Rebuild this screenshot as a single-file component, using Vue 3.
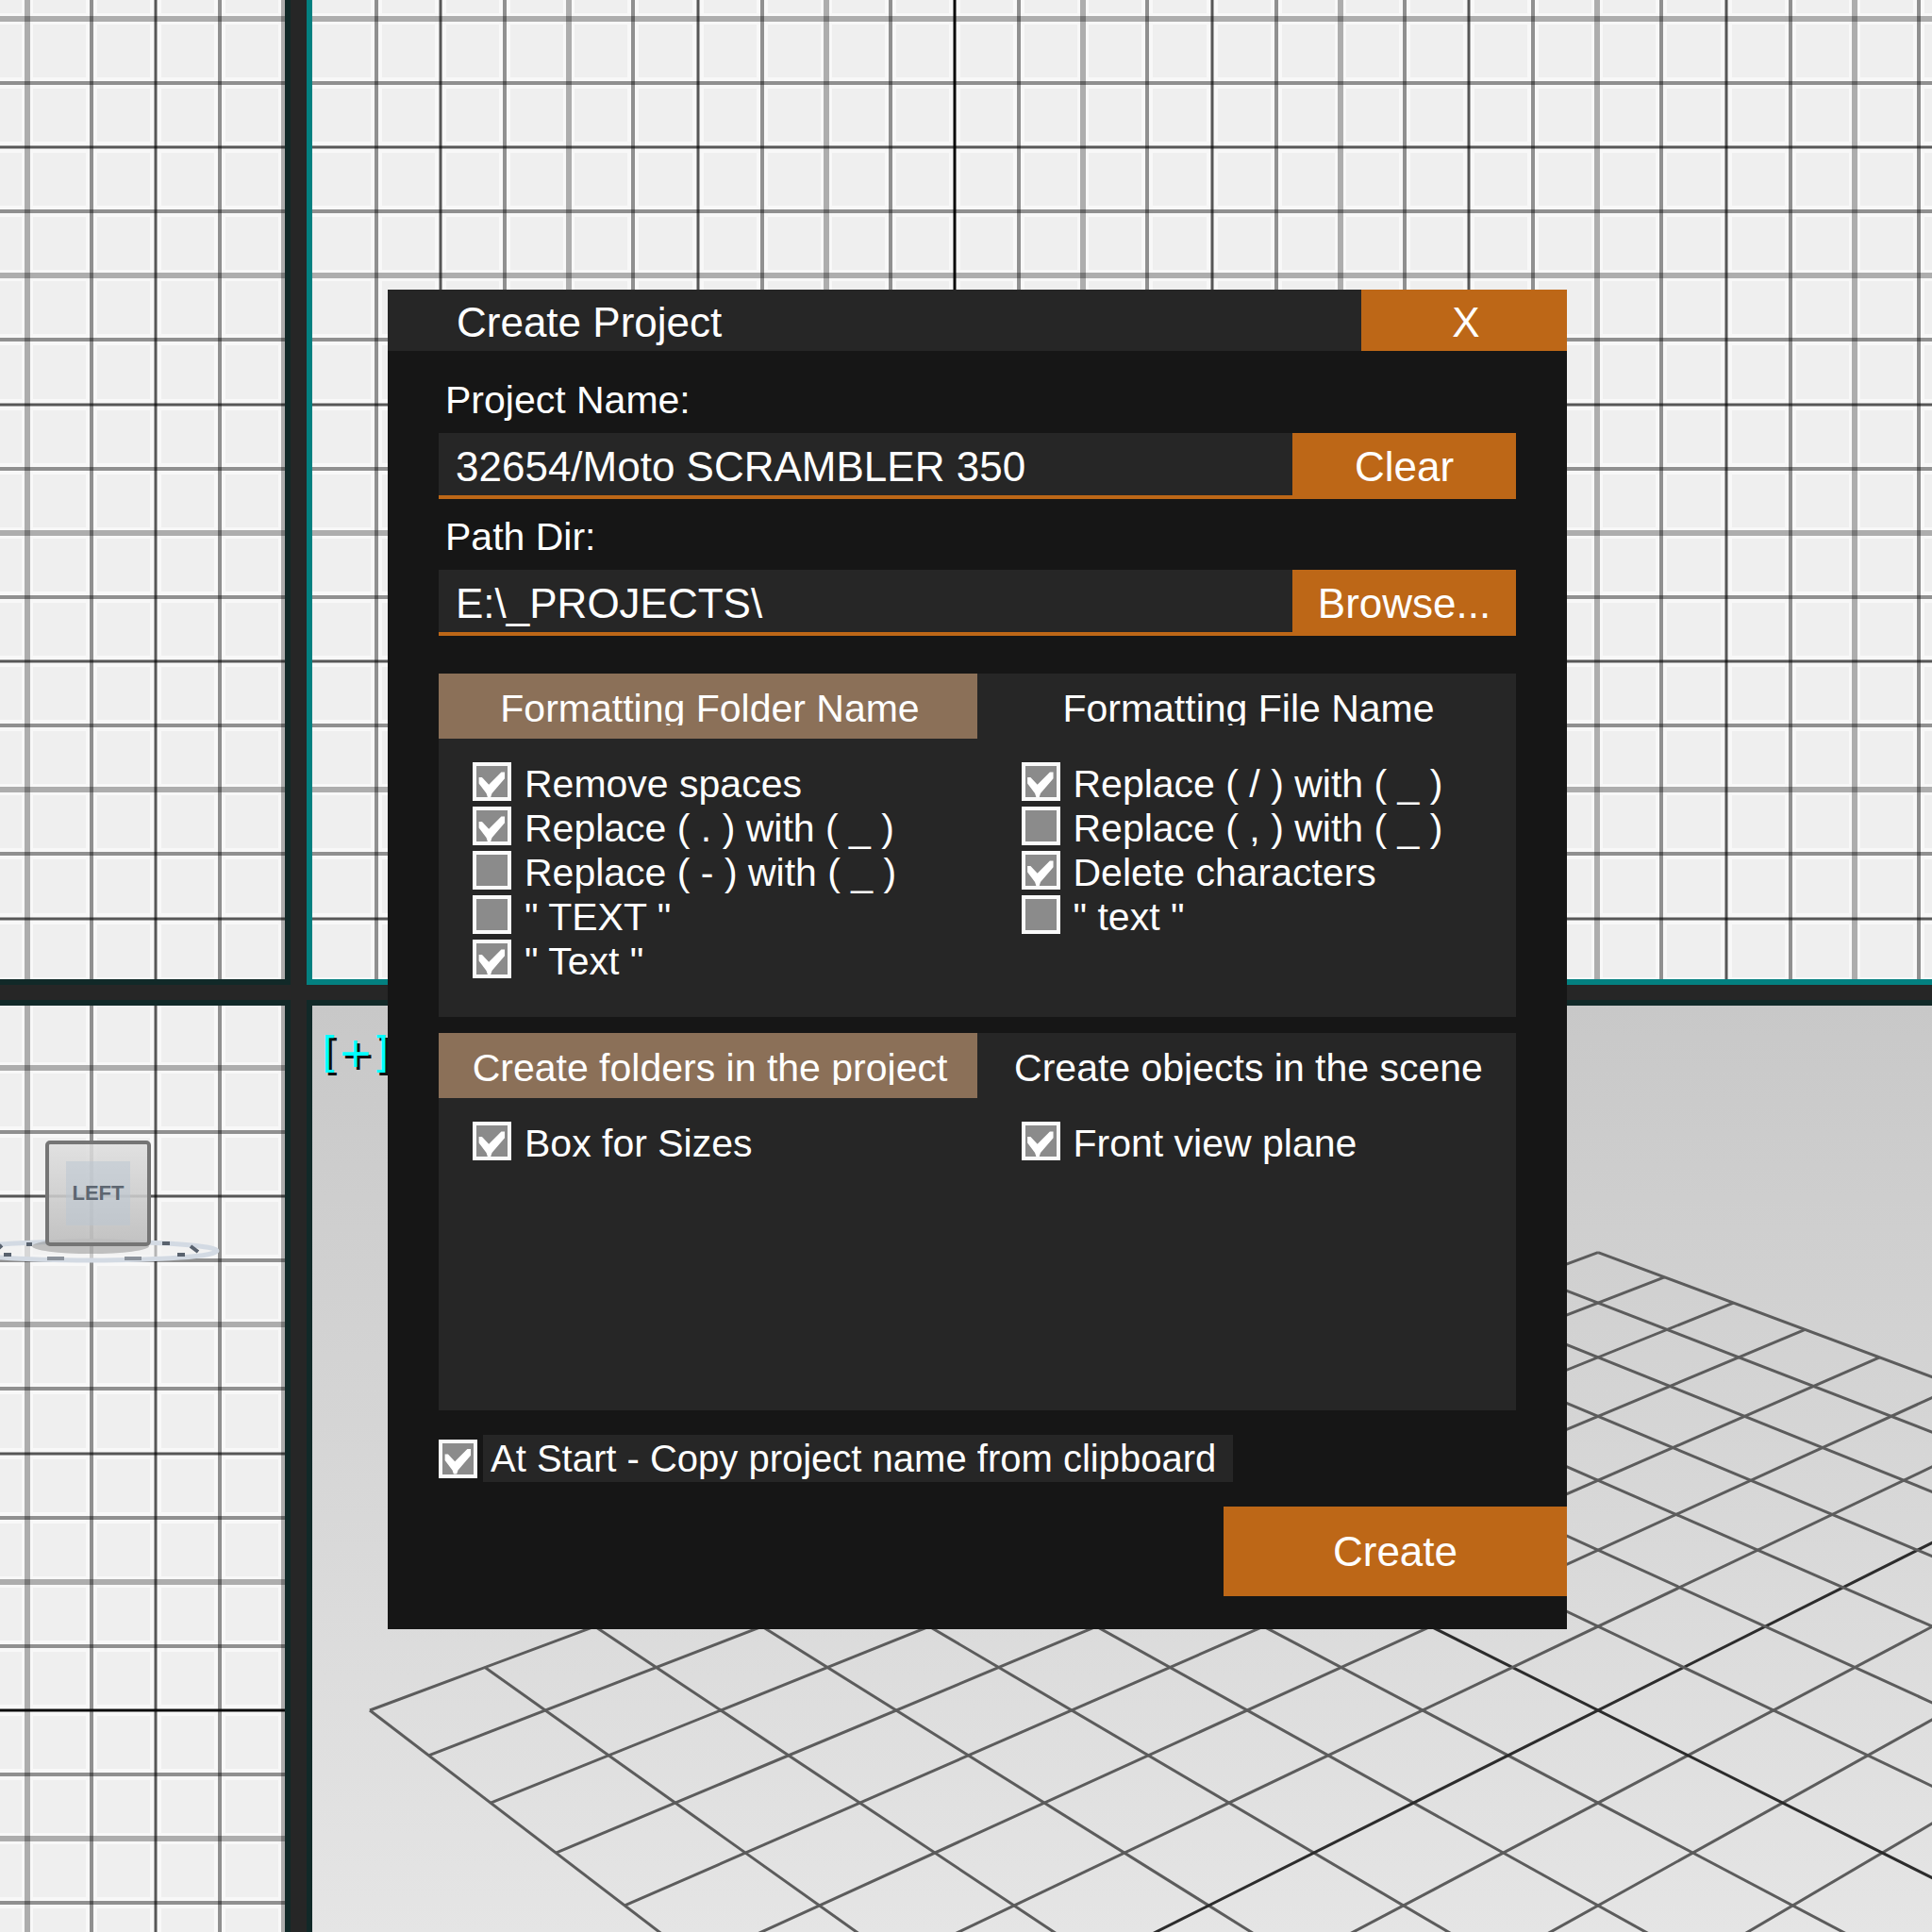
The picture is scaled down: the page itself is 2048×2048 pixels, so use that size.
<template>
  <main class="workspace">
    <div class="viewports">
      <section v-for="view in views" :key="view.name" class="viewport" :class="{ active: view.active }">
        <svg class="grid" aria-hidden="true">
          <g class="halo">
            <line v-for="line in view.columns" :key="'x' + line.at" :x1="line.at" :x2="line.at" y1="0" y2="100%"/>
            <line v-for="line in view.rows" :key="'y' + line.at" :y1="line.at" :y2="line.at" x1="0" x2="100%"/>
          </g>
          <line v-for="line in view.columns" :key="'x' + line.at" :class="line.kind"
                :x1="line.at" :x2="line.at" y1="0" y2="100%"/>
          <line v-for="line in view.rows" :key="'y' + line.at" :class="line.kind"
                :y1="line.at" :y2="line.at" x1="0" x2="100%"/>
        </svg>

        <div v-if="view.cube" class="view-cube">
          <svg class="compass" viewBox="0 0 280 32" aria-hidden="true">
            <ellipse cx="140" cy="13" rx="134" ry="10" fill="#f4f4f4" fill-opacity="0.6" stroke="#d3dae3" stroke-width="5"/>
            <ellipse cx="140" cy="8" rx="62" ry="8" fill="#8c8c8c" opacity="0.5"/>
            <path d="M38 14l8-7M48 17h8M72 6h6M216 5h8M232 17h8M246 8l8 6" fill="none" stroke="#59626e" stroke-width="4"/>
            <path d="M94 21h18M176 21h18" fill="none" stroke="#8b929b" stroke-width="4"/>
          </svg>
          <div class="cube-face"><span>LEFT</span></div>
        </div>
      </section>

      <section class="viewport perspective">
        <svg class="grid" viewBox="0 0 1717 982" preserveAspectRatio="xMinYMin slice" aria-hidden="true">
          <line v-for="(line, i) in floorLines" :key="i" :class="line.axis ? 'floor-axis' : 'floor'"
                :x1="line.from.x" :y1="line.from.y" :x2="line.to.x" :y2="line.to.y"/>
        </svg>
        <span class="view-menu">[+]</span>
      </section>
    </div>

    <form class="dialog" role="dialog" aria-labelledby="dialog-title" @submit.prevent>
      <header class="title-bar">
        <h1 id="dialog-title">Create Project</h1>
        <button type="button" class="btn close">X</button>
      </header>

      <div class="content">
        <label for="project-name">Project Name:</label>
        <div class="field">
          <input id="project-name" v-model="projectName" type="text" spellcheck="false">
          <button type="button" class="btn" @click="projectName = ''">Clear</button>
        </div>

        <label for="path-dir">Path Dir:</label>
        <div class="field">
          <input id="path-dir" v-model="pathDir" type="text" spellcheck="false">
          <button type="button" class="btn">Browse...</button>
        </div>

        <section v-for="(panel, p) in panels" :key="p" class="panel" :class="panel.size">
          <div class="tabs">
            <button v-for="(tab, t) in panel.tabs" :key="tab" type="button" class="tab"
                    :class="{ selected: panel.selected === t }" @click="panel.selected = t">
              <span>{{ tab }}</span>
            </button>
          </div>
          <div class="options">
            <div v-for="(column, c) in panel.columns" :key="c">
              <label v-for="option in column" :key="option.label" class="option">
                <input v-model="option.checked" type="checkbox">
                <span>{{ option.label }}</span>
              </label>
            </div>
          </div>
        </section>

        <label class="option clipboard">
          <input v-model="copyAtStart" type="checkbox">
          <span>At Start - Copy project name from clipboard</span>
        </label>
      </div>

      <footer class="actions">
        <button type="submit" class="btn create">Create</button>
      </footer>
    </form>
  </main>
</template>

<script setup>
import {ref} from 'vue'

const projectName = ref('32654/Moto SCRAMBLER 350')
const pathDir = ref('E:\\_PROJECTS\\')
const copyAtStart = ref(true)

const panels = ref([
  {
    size: 'formatting',
    tabs: ['Formatting Folder Name', 'Formatting File Name'],
    selected: 0,
    columns: [
      [
        {label: 'Remove spaces', checked: true},
        {label: 'Replace ( . ) with ( _ )', checked: true},
        {label: 'Replace ( - ) with ( _ )', checked: false},
        {label: '" TEXT "', checked: false},
        {label: '" Text "', checked: true}
      ],
      [
        {label: 'Replace ( / ) with ( _ )', checked: true},
        {label: 'Replace ( , ) with ( _ )', checked: false},
        {label: 'Delete characters', checked: true},
        {label: '" text "', checked: false}
      ]
    ]
  },
  {
    size: 'creating',
    tabs: ['Create folders in the project', 'Create objects in the scene'],
    selected: 0,
    columns: [
      [{label: 'Box for Sizes', checked: true}],
      [{label: 'Front view plane', checked: true}]
    ]
  }
])

// Flat views: every fourth line is a major one
const STEP = 68.13
const KINDS = ['major', 'mid', 'minor', 'mid']

function gridLines(firstMajor, length, axis = null) {
  const lines = []
  for (let i = -4; firstMajor + i * STEP < length; i++) {
    const at = Math.round(firstMajor + i * STEP)
    if (at < 4) continue
    lines.push({at, kind: i === axis ? 'axis' : KINDS[(i + 4) % 4]})
  }
  return lines
}

const views = [
  {name: 'top', columns: gridLines(165, 1200), rows: gridLines(156, 1400)},
  {name: 'front', active: true, columns: gridLines(136, 3000, 8), rows: gridLines(156, 1400)},
  {name: 'left', cube: true, columns: gridLines(165, 1200), rows: gridLines(202, 1400, 8)}
]

// Floor grid of the perspective view, 7 cells each way from the origin
const HALF = 7

function project(u, v) {
  const scale = 1 / (1 + 0.02465 * (u + v))
  return {x: 1363 + 93 * (u - v) * scale, y: 1892 * scale - 1145}
}

const floorLines = []
for (let i = -HALF; i <= HALF; i++) {
  floorLines.push({from: project(i, -HALF), to: project(i, HALF), axis: i === 0})
  floorLines.push({from: project(-HALF, i), to: project(HALF, i), axis: i === 0})
}
</script>

<style>
body {
  margin: 0;
  background: #262626;
}
</style>

<style scoped>
.workspace {
  position: relative;
  min-height: 100vh;
  display: grid;
  overflow: hidden;
  font-family: "Liberation Sans", Arial, sans-serif;
  color: #fff;
}

.viewports {
  display: grid;
  grid-template-columns: 302fr 1717fr;
  grid-template-rows: 1038fr 982fr;
  gap: 28px 29px;
  background: #262626;
}

.viewport {
  position: relative;
  min-width: 0;
  background: #efefef;
  outline: 6px solid #112928;
}

.viewport.active {
  z-index: 1;
  outline-color: #038080;
}

.viewport.perspective {
  background: linear-gradient(#c8c8c8, #e5e5e5);
}

.grid {
  position: absolute;
  inset: 0;
  width: 100%;
  height: 100%;
}

.halo {
  stroke: #fff;
  stroke-width: 12;
  opacity: 0.6;
}

.major {
  stroke: rgba(0, 0, 0, 0.65);
  stroke-width: 3;
}

.mid {
  stroke: rgba(0, 0, 0, 0.42);
  stroke-width: 4;
}

.minor {
  stroke: rgba(0, 0, 0, 0.3);
  stroke-width: 6;
}

.axis {
  stroke: #0a0a0a;
  stroke-width: 3;
}

.floor {
  stroke: #5c5c5c;
  stroke-width: 3;
}

.floor-axis {
  stroke: #2c2c2c;
  stroke-width: 3;
}

.view-menu {
  position: absolute;
  top: 24px;
  left: 10px;
  font: 44px/52px "DejaVu Sans", sans-serif;
  color: #00ffff;
  text-shadow: 3px 3px 0 #101010;
}

.view-cube {
  position: absolute;
  top: 143px;
  left: 48px;
}

.compass {
  position: absolute;
  top: 104px;
  left: -92px;
  width: 280px;
  height: 32px;
}

.cube-face {
  position: relative;
  box-sizing: border-box;
  display: grid;
  place-items: center;
  width: 112px;
  height: 112px;
  border: 4px solid #757575;
  border-radius: 5px;
  background: linear-gradient(rgba(222, 222, 222, 0.85), rgba(190, 190, 190, 0.9));
}

.cube-face span {
  width: 68px;
  background: rgba(185, 197, 210, 0.5);
  font: bold 22px/68px "Liberation Sans Narrow", "Liberation Sans", sans-serif;
  text-align: center;
  color: #5d6671;
}

/* Dialog window */
.dialog {
  position: absolute;
  z-index: 2;
  top: 307px;
  left: 411px;
  right: 387px;
  background: #161616;
}

.title-bar {
  display: flex;
  justify-content: space-between;
  height: 65px;
  background: #262626;
}

.title-bar h1 {
  margin: 0;
  padding: 5px 0 0 73px;
  font-size: 44px;
  font-weight: 400;
  line-height: 59px;
}

.btn {
  flex: none;
  margin: 0;
  padding: 0;
  border: 0;
  background: #bd6717;
  font: inherit;
  font-size: 44px;
  color: #fff;
  cursor: pointer;
}

.close {
  width: 218px;
  padding: 5px 0 0 4px;
}

.content {
  display: flex;
  flex-direction: column;
  padding: 28px 54px 26px;
  font-size: 41px;
}

.content > label[for] {
  padding: 0 7px 11px;
  line-height: 48px;
}

.field {
  display: flex;
  height: 70px;
  margin-bottom: 16px;
}

.field input {
  flex: 1;
  min-width: 0;
  box-sizing: border-box;
  margin: 0;
  padding: 5px 18px 0;
  border: 0;
  border-bottom: 4px solid #bd6717;
  border-radius: 0;
  outline: 0;
  background: #262626;
  font: inherit;
  font-size: 44px;
  color: #fff;
}

.field .btn {
  width: 237px;
  padding-top: 2px;
}

.panel {
  margin-bottom: 17px;
  background: #262626;
}

.formatting {
  min-height: 364px;
  margin-top: 24px;
}

.creating {
  min-height: 400px;
  margin-bottom: 26px;
}

.tabs {
  display: grid;
  grid-template-columns: 1fr 1fr;
}

.tab {
  height: 69px;
  margin: 0;
  padding: 2px 0 0 4px;
  border: 0;
  background: transparent;
  font: inherit;
  color: #fff;
  cursor: pointer;
}

.tab.selected {
  background: #8b7058;
}

/* Caption box is shorter than the text, so descenders are cut */
.tab span {
  display: block;
  height: 38px;
  overflow: hidden;
  line-height: 40px;
  white-space: nowrap;
}

.options {
  display: grid;
  grid-template-columns: 1fr 1fr;
  column-gap: 57px;
  padding: 25px 0 0 36px;
}

.option {
  display: flex;
  gap: 14px;
  line-height: 47px;
  white-space: nowrap;
}

.option input {
  appearance: none;
  flex: none;
  box-sizing: border-box;
  width: 41px;
  height: 41px;
  margin: 0;
  border: 4px solid #fafafa;
  background: #8b8b8b;
}

.option input:checked::before {
  content: "";
  display: block;
  height: 33px;
  background: #fff;
  clip-path: polygon(8% 36%, 18% 36%, 40% 60%, 80% 20%, 91% 20%, 91% 40%, 50% 88%, 46% 100%, 36% 100%, 32% 88%, 8% 56%);
}

.clipboard {
  align-self: flex-start;
  align-items: center;
  gap: 6px;
  font-size: 40px;
  line-height: 50px;
}

.clipboard span {
  padding: 0 18px 0 8px;
  background: #262626;
}

.actions {
  display: flex;
  justify-content: flex-end;
  padding-bottom: 35px;
}

.create {
  width: 364px;
  height: 95px;
}
</style>
